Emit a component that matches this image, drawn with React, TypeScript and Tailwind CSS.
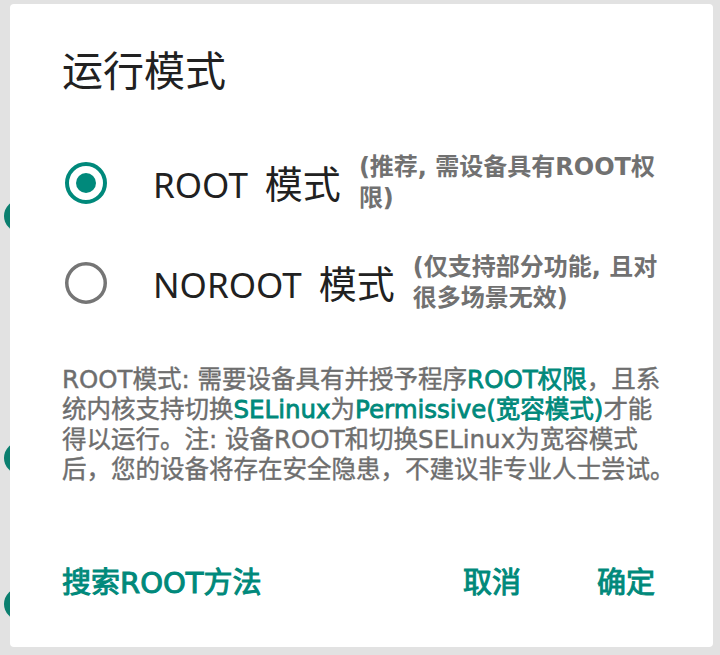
const cjk = "font-['Roboto','Noto_Sans_CJK_SC',sans-serif]";
const label = "font-['Noto_Sans','Noto_Sans_CJK_SC',sans-serif]";
const wide = "font-['DejaVu_Sans','Noto_Sans_CJK_SC',sans-serif]";

function Radio({ checked }: { checked: boolean }) {
  return (
    <svg width="48" height="48" viewBox="0 0 48 48" className="shrink-0">
      {checked ? (
        <>
          <circle cx="24" cy="24" r="19" fill="none" stroke="#00897b" strokeWidth="4" />
          <circle cx="24" cy="24" r="10" fill="#00897b" />
        </>
      ) : (
        <circle cx="24" cy="24" r="19.25" fill="none" stroke="#757575" strokeWidth="3.5" />
      )}
    </svg>
  );
}

function ModeRow({ checked, name, note }: { checked: boolean; name: string; note: string }) {
  return (
    <div className="flex h-[100px] items-center">
      <Radio checked={checked} />
      <span className={`ml-[43px] shrink-0 text-[35px] leading-none text-[#212121] ${label}`}>
        {name}
        <span className="ml-[17px] text-[38px]">模式</span>
      </span>
      <span className={`ml-[18px] flex-1 text-[24px] leading-[31px] font-bold text-[#717171] ${wide}`}>
        {note}
      </span>
    </div>
  );
}

function Hl({ children }: { children: string }) {
  return <span className="text-[#00897b] [-webkit-text-stroke:0.8px_#00897b]">{children}</span>;
}

export default function App() {
  return (
    <div className="flex h-[655px] w-[720px] bg-[#e2e2e2] pt-[4px] pr-[7px] pb-[8px]">
      <div className="flex w-[10px] shrink-0 flex-col overflow-hidden">
        <div className="ml-[4px] mt-[196px] h-[32px] w-[32px] shrink-0 rounded-full bg-[#0b7f6f]" />
        <div className="ml-[4px] mt-[210px] h-[32px] w-[32px] shrink-0 rounded-full bg-[#0b7f6f]" />
        <div className="ml-[4px] mt-[114px] h-[32px] w-[32px] shrink-0 rounded-full bg-[#0b7f6f]" />
      </div>
      <div className="flex flex-1 flex-col rounded-[4px] bg-white pl-[52px] pr-[38px] pt-[43px]">
        <h1 className={`text-[41px] leading-[50px] font-normal text-[#212121] ${cjk}`}>运行模式</h1>
        <div className="mt-[36px] flex flex-col">
          <ModeRow checked name="ROOT" note="(推荐, 需设备具有ROOT权限)" />
          <ModeRow checked={false} name="NOROOT" note="(仅支持部分功能, 且对很多场景无效)" />
        </div>
        <p className={`mt-[32px] text-[24.5px] leading-[30px] text-[#6e6e6e] [-webkit-text-stroke:0.4px_#6e6e6e] ${wide}`}>
          ROOT模式: 需要设备具有并授予程序<Hl>ROOT权限</Hl>，且系统内核支持切换<Hl>SELinux</Hl>为
          <Hl>Permissive(宽容模式)</Hl>才能得以运行。注: 设备ROOT和切换SELinux为宽容模式后，您的设备将存在安全隐患，不建议非专业人士尝试。
        </p>
        <div className={`mt-[78px] mr-[20px] flex items-center justify-between text-[29px] leading-[40px] text-[#00897b] [-webkit-text-stroke:1px_#00897b] ${wide}`}>
          <button>搜索ROOT方法</button>
          <div className="flex gap-[76px]">
            <button>取消</button>
            <button>确定</button>
          </div>
        </div>
      </div>
    </div>
  );
}
